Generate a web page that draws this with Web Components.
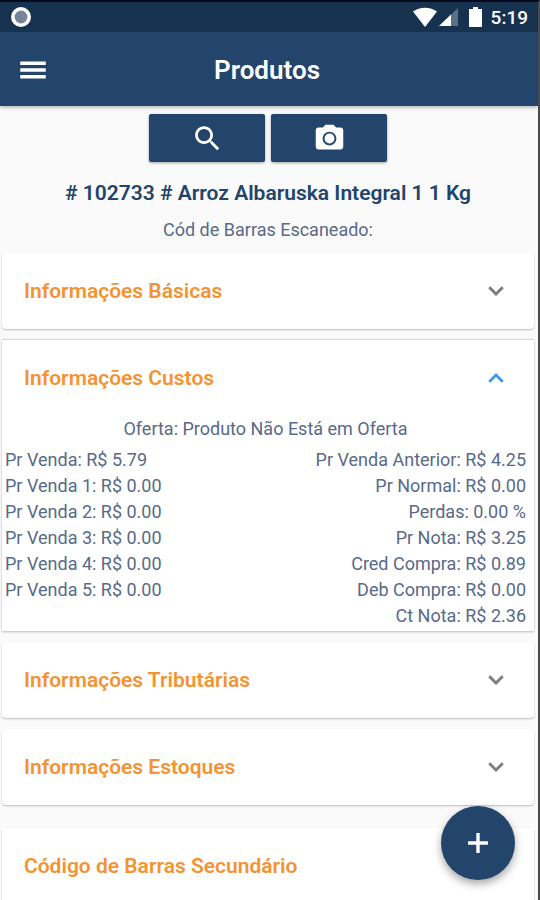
<!DOCTYPE html>
<html lang="pt-BR">
<head>
<meta charset="utf-8">
<meta name="viewport" content="width=device-width, initial-scale=1">
<title>Produtos</title>
<style>
  html {
    background: #fafafa;
  }
  body {
    margin: 0;
    font-family: Roboto, "Liberation Sans", sans-serif;
    --navy: #23446b;
    --navy-dark: #16324f;
    --orange: #f39332;
    --ink: #596a88;
  }
</style>
</head>
<body>
<produtos-app>
  <status-bar slot="top" time="5:19"></status-bar>
  <app-header slot="top">Produtos</app-header>

  <tool-button icon="search" label="Pesquisar" slot="tools"></tool-button>
  <tool-button icon="camera" label="Escanear" slot="tools"></tool-button>

  <product-title>
    # 102733 # Arroz Albaruska Integral 1 1 Kg
    <span slot="code">Cód de Barras Escaneado:</span>
  </product-title>

  <info-panel heading="Informações Básicas"></info-panel>
  <info-panel heading="Informações Custos" open>
    <cost-list offer="Oferta: Produto Não Está em Oferta">
      <span slot="left">Pr Venda: R$ 5.79</span>
      <span slot="left">Pr Venda 1: R$ 0.00</span>
      <span slot="left">Pr Venda 2: R$ 0.00</span>
      <span slot="left">Pr Venda 3: R$ 0.00</span>
      <span slot="left">Pr Venda 4: R$ 0.00</span>
      <span slot="left">Pr Venda 5: R$ 0.00</span>
      <span slot="right">Pr Venda Anterior: R$ 4.25</span>
      <span slot="right">Pr Normal: R$ 0.00</span>
      <span slot="right">Perdas: 0.00 %</span>
      <span slot="right">Pr Nota: R$ 3.25</span>
      <span slot="right">Cred Compra: R$ 0.89</span>
      <span slot="right">Deb Compra: R$ 0.00</span>
      <span slot="right">Ct Nota: R$ 2.36</span>
    </cost-list>
  </info-panel>
  <info-panel heading="Informações Tributárias"></info-panel>
  <info-panel heading="Informações Estoques"></info-panel>
  <info-panel heading="Código de Barras Secundário" spaced></info-panel>

  <fab-button slot="fab" label="Adicionar"></fab-button>
</produtos-app>

<script>
const ICONS = {
  search: "M15.5 14h-.79l-.28-.27C15.41 12.59 16 11.11 16 9.5 16 5.91 13.09 3 9.5 3S3 5.91 3 9.5 5.91 16 9.5 16c1.61 0 3.09-.59 4.23-1.57l.27.28v.79l5 4.99L20.49 19l-4.99-5zm-6 0C7.01 14 5 11.99 5 9.5S7.01 5 9.5 5 14 7.01 14 9.5 11.99 14 9.5 14z",
  camera: "M9 2L7.17 4H4c-1.1 0-2 .9-2 2v12c0 1.1.9 2 2 2h16c1.1 0 2-.9 2-2V6c0-1.1-.9-2-2-2h-3.17L15 2H9zm3 15c-2.76 0-5-2.24-5-5s2.24-5 5-5 5 2.24 5 5-2.24 5-5 5zM12 8.4a3.6 3.6 0 1 0 0 7.2 3.6 3.6 0 0 0 0-7.2z",
  menu: "M3 18h18v-2.400H3V18zm0-4.800h18v-2.400H3v2.400zM3 6v2.400h18V6H3z",
  plus: "M19 13.200h-5.800V19h-2.400v-5.800H5v-2.400h5.800V5h2.400v5.800H19z",
  down: "M7.41 8.2L12 12.78l4.59-4.58L18.200 9.800l-6.200 6.200-6.200-6.200z",
};

function icon(name, size) {
  return `<svg viewBox="0 0 24 24" width="${size}" height="${size}" fill="currentColor" aria-hidden="true"><path d="${ICONS[name]}"/></svg>`;
}

class ProdutosApp extends HTMLElement {
  constructor() {
    super();
    this.attachShadow({ mode: "open" });
    this.shadowRoot.innerHTML = `
      <style>
        :host {
          display: block;
          box-sizing: border-box;
          height: 100vh;
          overflow: hidden;
          border-top: 2px solid #020a1c;
          border-right: 2px solid #4a4a4a;
          background: #fafafa;
        }
        .screen {
          display: flex;
          flex-direction: column;
          height: 100%;
        }
        .top {
          position: relative;
          z-index: 1;
          box-shadow: 0 1px 4px rgba(0, 0, 0, 0.35);
        }
        main {
          flex: 1;
          min-height: 0;
          overflow-y: auto;
          scrollbar-width: none;
          padding: 8px 4px 0 2px;
        }
        .tools {
          display: flex;
          justify-content: center;
          gap: 6px;
        }
        .fab {
          position: fixed;
          right: 25px;
          bottom: 20px;
          z-index: 2;
        }
      </style>
      <div class="screen">
        <div class="top"><slot name="top"></slot></div>
        <main>
          <div class="tools"><slot name="tools"></slot></div>
          <slot></slot>
        </main>
        <div class="fab"><slot name="fab"></slot></div>
      </div>
    `;
  }
}

class StatusBar extends HTMLElement {
  constructor() {
    super();
    this.attachShadow({ mode: "open" });
  }

  connectedCallback() {
    this.shadowRoot.innerHTML = `
      <style>
        :host {
          display: flex;
          align-items: center;
          justify-content: space-between;
          height: 30px;
          padding: 0 10px;
          background: var(--navy-dark);
          color: #fff;
        }
        .right {
          display: flex;
          align-items: center;
          font-size: 19px;
          font-weight: 500;
        }
        svg { display: block; }
        .signal { margin-left: 2px; }
        .battery { margin: 0 9px 0 10px; }
      </style>
      <svg width="22" height="22" viewBox="0 0 22 22">
        <circle cx="11" cy="11" r="8.2" fill="#76839a" stroke="#fff" stroke-width="3.6"/>
      </svg>
      <div class="right">
        <svg width="24" height="20" viewBox="0 0 24 20" fill="#fff">
          <path d="M0 4.500C6.500-.6 17.500-.6 24 4.500L12 20z"/>
        </svg>
        <svg class="signal" width="20" height="20" viewBox="0 0 20 20">
          <path d="M0 19L19 1v18z" fill="#5c6f84"/>
          <path d="M0 19L12 7.600V19z" fill="#fff"/>
        </svg>
        <svg class="battery" width="13" height="20" viewBox="0 0 13 20" fill="#fff">
          <path d="M4 0h5v2h4v18H0V2h4z"/>
        </svg>
        <span>${this.getAttribute("time")}</span>
      </div>
    `;
  }
}

class AppHeader extends HTMLElement {
  constructor() {
    super();
    this.attachShadow({ mode: "open" });
    this.shadowRoot.innerHTML = `
      <style>
        :host {
          display: grid;
          grid-template-columns: 34px 1fr 34px;
          align-items: center;
          height: 72px;
          padding: 2px 20px 0 16px;
          background: var(--navy);
          color: #fff;
        }
        button {
          display: flex;
          padding: 0;
          border: 0;
          background: none;
          color: inherit;
          cursor: pointer;
        }
        h1 {
          margin: 0;
          text-align: center;
          font-size: 26px;
          font-weight: 600;
          line-height: 32px;
        }
      </style>
      <button type="button" aria-label="Menu">${icon("menu", 34)}</button>
      <h1><slot></slot></h1>
    `;
  }
}

class ToolButton extends HTMLElement {
  constructor() {
    super();
    this.attachShadow({ mode: "open" });
  }

  connectedCallback() {
    this.shadowRoot.innerHTML = `
      <style>
        :host { display: block; }
        button {
          display: flex;
          align-items: center;
          justify-content: center;
          width: 116px;
          height: 48px;
          padding: 0;
          border: 0;
          border-radius: 2px;
          background: var(--navy);
          color: #fff;
          box-shadow: 0 1px 3px rgba(0, 0, 0, 0.35);
          cursor: pointer;
        }
      </style>
      <button type="button" aria-label="${this.getAttribute("label")}">
        ${icon(this.getAttribute("icon"), 33)}
      </button>
    `;
  }
}

class ProductTitle extends HTMLElement {
  constructor() {
    super();
    this.attachShadow({ mode: "open" });
    this.shadowRoot.innerHTML = `
      <style>
        :host {
          display: block;
          padding: 15px 0 10px;
          text-align: center;
        }
        h2 {
          margin: 0;
          color: var(--navy);
          font-size: 21px;
          font-weight: 600;
          line-height: 32px;
        }
        p {
          margin: 8px 0 0;
          color: var(--ink);
          font-size: 18px;
          line-height: 26px;
        }
      </style>
      <h2><slot></slot></h2>
      <p><slot name="code"></slot></p>
    `;
  }
}

class InfoPanel extends HTMLElement {
  static get observedAttributes() {
    return ["open"];
  }

  constructor() {
    super();
    this.attachShadow({ mode: "open" });
  }

  connectedCallback() {
    this.shadowRoot.innerHTML = `
      <style>
        :host {
          display: block;
          margin-bottom: 11px;
          border-radius: 4px;
          background: #fff;
          box-shadow: 0 1px 2px rgba(0, 0, 0, 0.26);
        }
        :host([open]) {
          border-radius: 0;
          box-shadow: 0 -1px 1px rgba(0, 0, 0, 0.12), 0 1px 2px rgba(0, 0, 0, 0.26);
        }
        :host([spaced]) { margin-top: 23px; }
        h3 { margin: 0; }
        button {
          display: flex;
          align-items: center;
          justify-content: space-between;
          width: 100%;
          height: 76px;
          padding: 0 23px 0 22px;
          border: 0;
          background: none;
          color: var(--orange);
          font-family: inherit;
          font-size: 21px;
          font-weight: 600;
          text-align: left;
          cursor: pointer;
        }
        svg { color: #7d7d7d; }
        :host([open]) svg {
          color: #3d97ee;
          transform: rotate(180deg);
        }
        .body { display: none; }
        :host([open]) .body { display: block; }
      </style>
      <h3>
        <button type="button" aria-expanded="${this.hasAttribute("open")}">
          <span>${this.getAttribute("heading")}</span>
          ${icon("down", 30)}
        </button>
      </h3>
      <div class="body"><slot></slot></div>
    `;
    this.shadowRoot.querySelector("button").addEventListener("click", () => {
      this.toggleAttribute("open");
    });
  }

  attributeChangedCallback() {
    const button = this.shadowRoot.querySelector("button");
    if (button) button.setAttribute("aria-expanded", this.hasAttribute("open"));
  }
}

class CostList extends HTMLElement {
  constructor() {
    super();
    this.attachShadow({ mode: "open" });
  }

  connectedCallback() {
    this.shadowRoot.innerHTML = `
      <style>
        :host {
          display: block;
          padding: 0 8px 2px 3px;
          color: var(--ink);
          font-size: 18px;
          line-height: 26px;
        }
        p {
          margin: 0 0 5px;
          text-align: center;
        }
        .columns {
          display: flex;
          justify-content: space-between;
        }
        .column {
          display: flex;
          flex-direction: column;
        }
        .column.end { text-align: right; }
      </style>
      <p>${this.getAttribute("offer")}</p>
      <div class="columns">
        <div class="column"><slot name="left"></slot></div>
        <div class="column end"><slot name="right"></slot></div>
      </div>
    `;
  }
}

class FabButton extends HTMLElement {
  constructor() {
    super();
    this.attachShadow({ mode: "open" });
  }

  connectedCallback() {
    this.shadowRoot.innerHTML = `
      <style>
        :host { display: block; }
        button {
          display: flex;
          align-items: center;
          justify-content: center;
          width: 74px;
          height: 74px;
          padding: 0;
          border: 0;
          border-radius: 50%;
          background: var(--navy);
          color: #fff;
          box-shadow: 0 4px 8px rgba(0, 0, 0, 0.35);
          cursor: pointer;
        }
      </style>
      <button type="button" aria-label="${this.getAttribute("label")}">${icon("plus", 34)}</button>
    `;
  }
}

customElements.define("produtos-app", ProdutosApp);
customElements.define("status-bar", StatusBar);
customElements.define("app-header", AppHeader);
customElements.define("tool-button", ToolButton);
customElements.define("product-title", ProductTitle);
customElements.define("info-panel", InfoPanel);
customElements.define("cost-list", CostList);
customElements.define("fab-button", FabButton);
</script>
</body>
</html>
